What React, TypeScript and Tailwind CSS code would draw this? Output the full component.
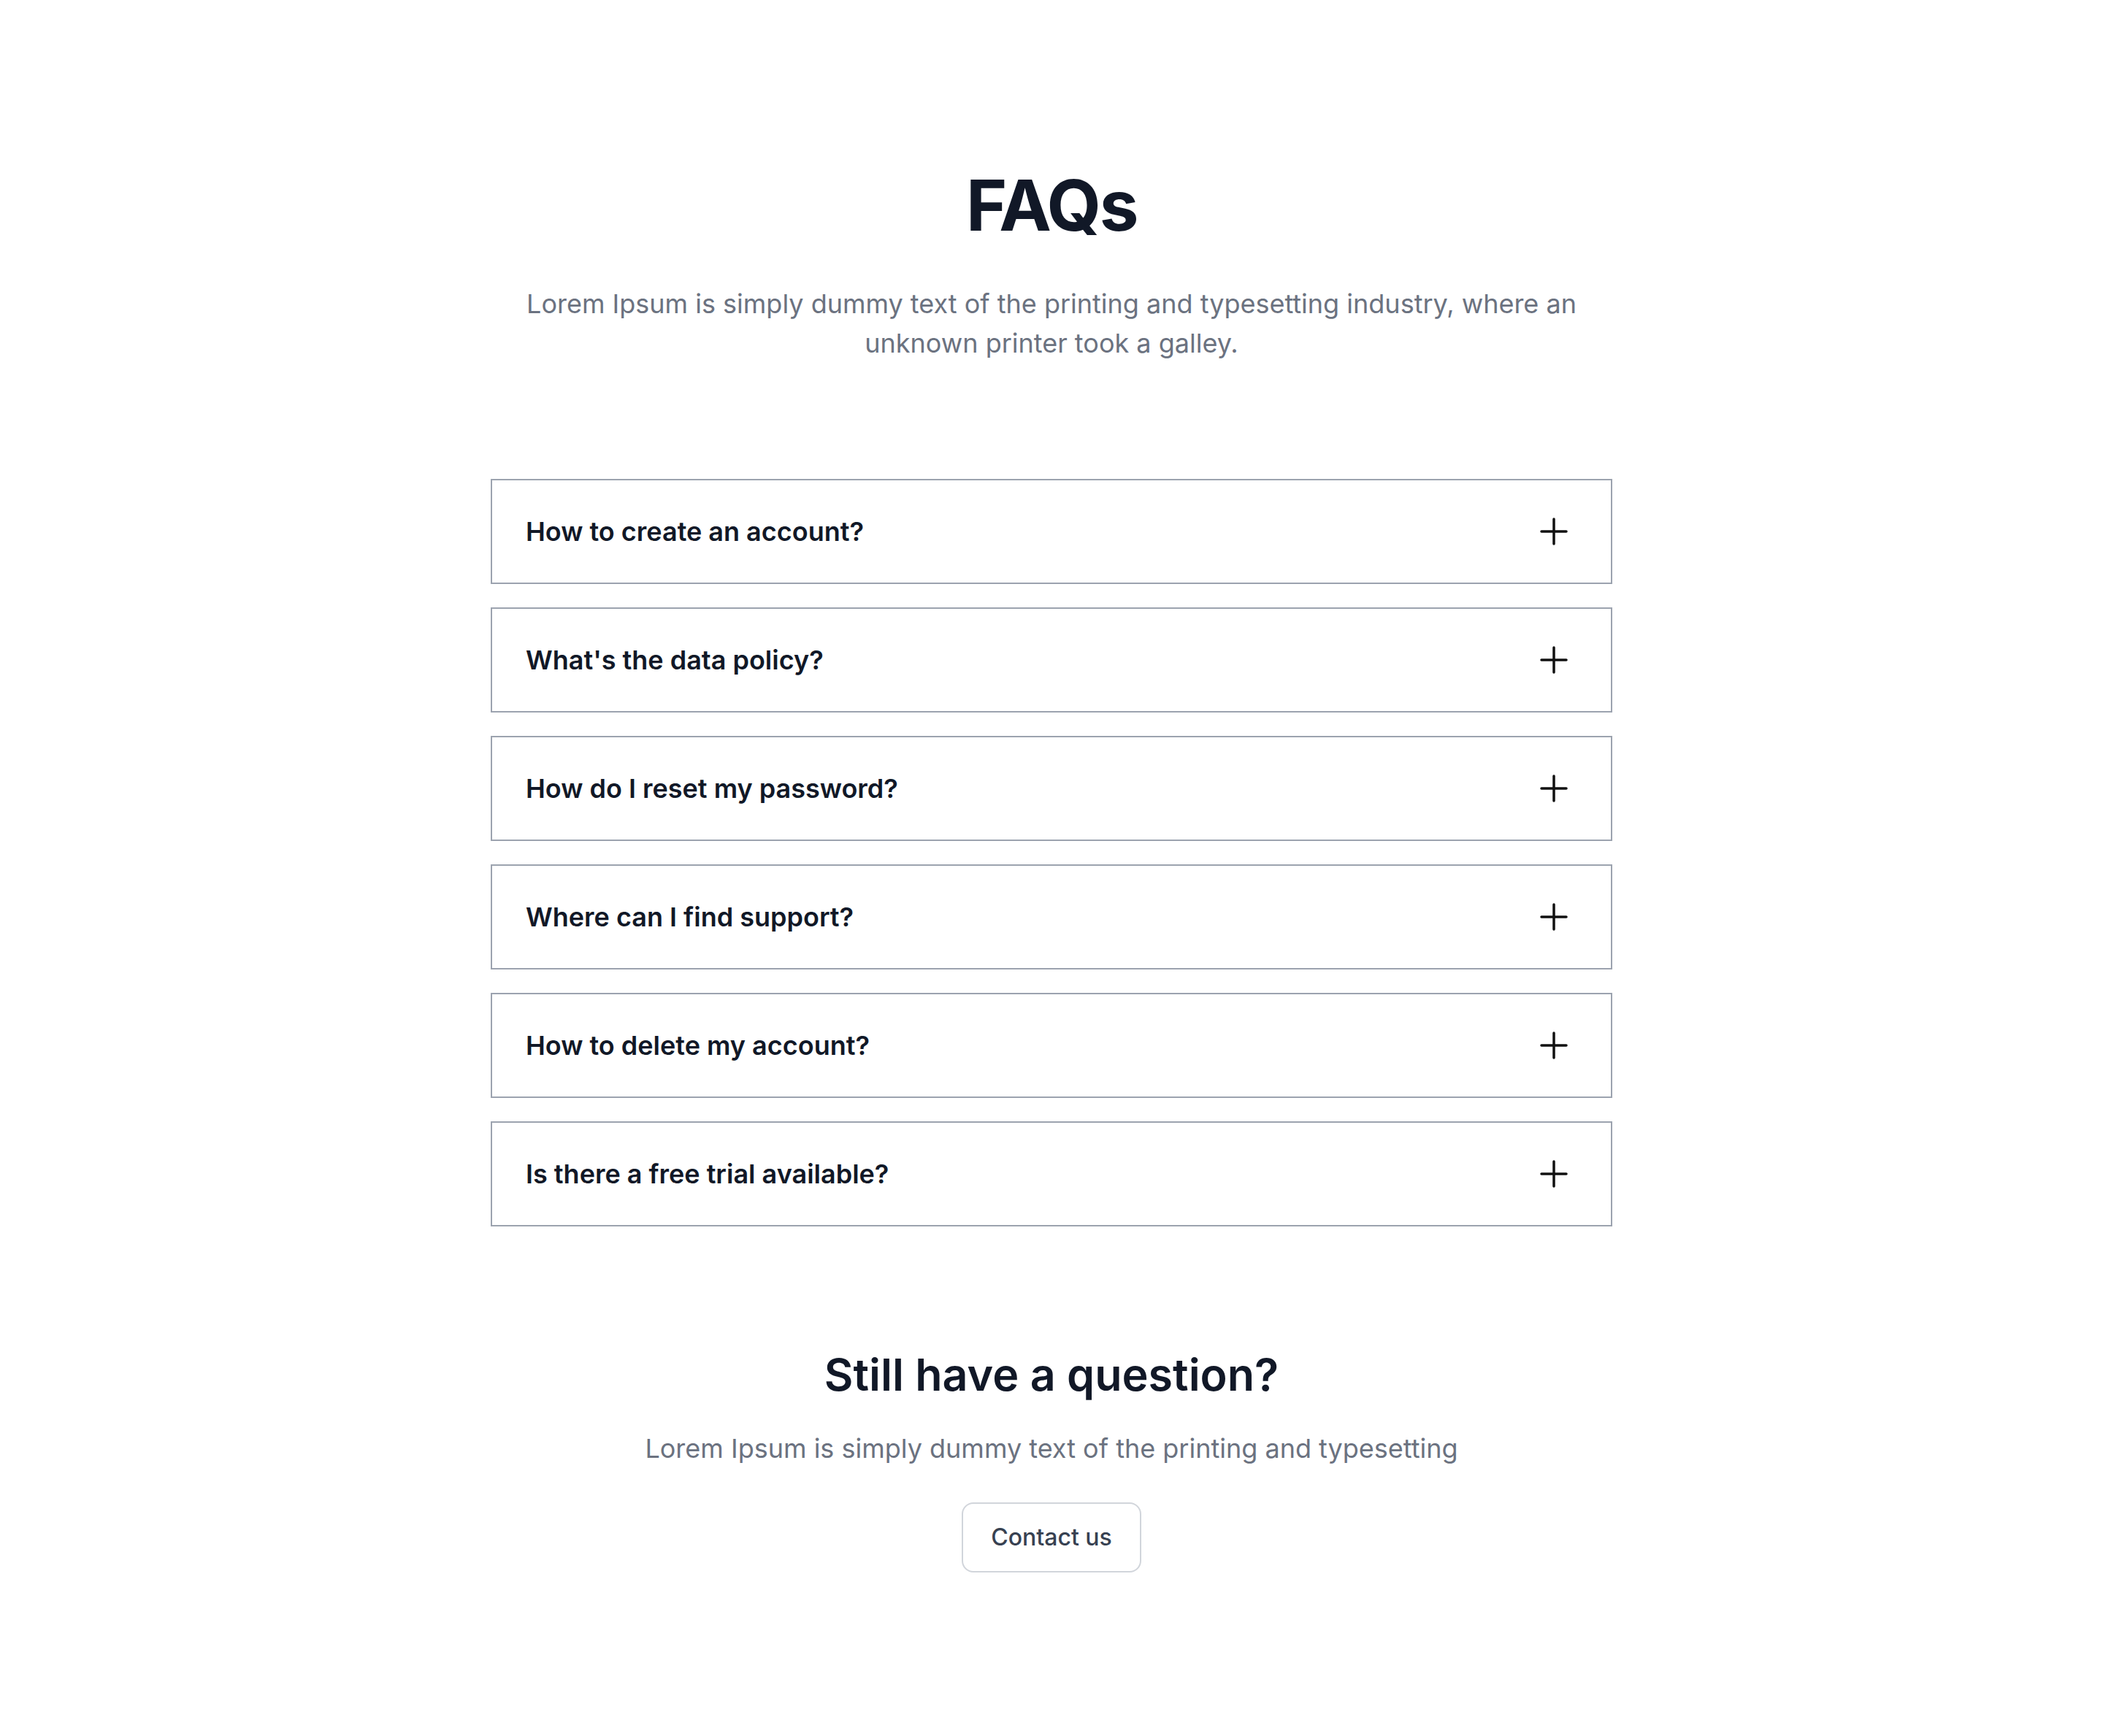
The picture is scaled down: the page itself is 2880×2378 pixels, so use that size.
import React from "react";

const faqs = [
  "How to create an account?",
  "What's the data policy?",
  "How do I reset my password?",
  "Where can I find support?",
  "How to delete my account?",
  "Is there a free trial available?",
];

function PlusIcon() {
  return (
    <svg width="40" height="40" viewBox="0 0 40 40" fill="none" aria-hidden="true">
      <path d="M20 3V37M3 20H37" stroke="#111111" strokeWidth="3.5" strokeLinecap="round" />
    </svg>
  );
}

export default function App() {
  return (
    <div
      className="min-h-[2378px] w-full bg-white flex flex-col items-center pt-[233px] pb-[225px]"
      style={{ fontFamily: "Inter, 'Noto Sans', sans-serif" }}
    >
      <h1 className="text-[96px] leading-none font-bold text-[#111827] tracking-tight">FAQs</h1>
      <p className="mt-[60px] max-w-[1536px] text-center text-[36px] leading-[54px] text-[#6b7280]">
        Lorem Ipsum is simply dummy text of the printing and typesetting industry, where an unknown printer took a galley.
      </p>

      <div className="mt-[159px] w-[1536px] flex flex-col gap-[32px]">
        {faqs.map((q) => (
          <button
            key={q}
            type="button"
            className="h-[144px] w-full border-2 border-[#9ca3af] bg-white flex items-center justify-between pl-[46px] pr-[58px] text-left"
          >
            <span className="text-[36px] leading-[56px] font-semibold text-[#111827]">{q}</span>
            <PlusIcon />
          </button>
        ))}
      </div>

      <h2 className="mt-[167px] text-[61px] leading-[72px] font-semibold text-[#111827]">
        Still have a question?
      </h2>
      <p className="mt-[37px] text-[36px] leading-[56px] text-[#6b7280]">
        Lorem Ipsum is simply dummy text of the printing and typesetting
      </p>
      <button
        type="button"
        className="mt-[46px] h-[96px] px-[38px] rounded-[16px] border-2 border-[#d1d5db] bg-white text-[32px] leading-[48px] font-medium text-[#374151]"
      >
        Contact us
      </button>
    </div>
  );
}
